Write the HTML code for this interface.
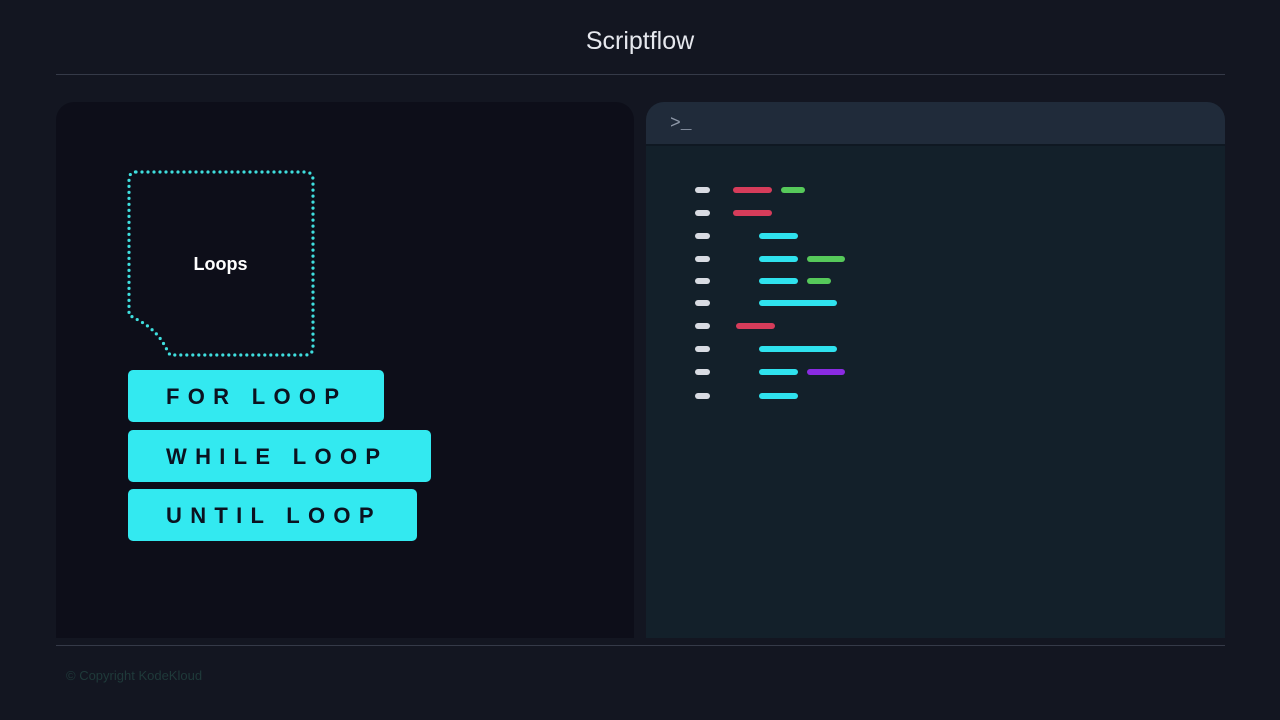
<!DOCTYPE html>
<html><head><style>
body{margin:0;width:1280px;height:720px;background:#131621;font-family:"Liberation Sans",sans-serif;position:relative;overflow:hidden}
.t{position:absolute;top:27px;left:0;width:1280px;text-align:center;color:#e6e8ee;font-size:25px}
.hr{position:absolute;left:56px;width:1169px;height:1px;background:#353a48}
.lp{position:absolute;left:56px;top:102px;width:578px;height:536px;background:#0d0e19;border-radius:18px 18px 0 0}
.rp{position:absolute;left:646px;top:102px;width:579px;height:536px;background:#13202a;border-radius:18px 18px 0 0;overflow:hidden}
.rh{height:42px;background:#202b3a;border-bottom:2px solid #0f1822}
.btn{position:absolute;left:128px;height:52px;background:#33e9f0;border-radius:5px;color:#0b1220;font-weight:bold;font-size:22px;letter-spacing:8.3px;line-height:54px;padding-left:38px;box-sizing:border-box}
.b{position:absolute;height:6px;border-radius:3px}
.g{background:#d8dbe2;left:695px;width:15px}.r{background:#d63c5a}.c{background:#2fe2ee}.n{background:#56c95a}.p{background:#8a2be2}
</style></head><body>
<div class="t">Scriptflow</div>
<div class="hr" style="top:74px"></div>
<div class="hr" style="top:645px"></div>
<div class="lp"></div>
<div class="rp"><div class="rh"><span style="position:absolute;left:24px;top:12px;color:#8e98a8;font-size:18px;font-family:'Liberation Mono',monospace">&gt;_</span></div></div>
<svg style="position:absolute;left:0;top:0" width="1280" height="720"><path d="M136 172 H305 Q313 172 313 180 V347 Q313 355 305 355 H170 L166 348 Q157 330 138 320 L129 315 V180 Q129 172 136 172 Z" fill="none" stroke="#3fdede" stroke-width="3.2" stroke-linecap="round" stroke-dasharray="0 6"/></svg>
<div style="position:absolute;left:128px;top:254px;width:185px;text-align:center;color:#fff;font-weight:bold;font-size:18px">Loops</div>
<div class="btn" style="top:370px;width:256px">FOR LOOP</div>
<div class="btn" style="top:430px;width:303px">WHILE LOOP</div>
<div class="btn" style="top:489px;width:289px">UNTIL LOOP</div>
<div class="b g" style="top:187px"></div><div class="b r" style="top:187px;left:733px;width:39px"></div><div class="b n" style="top:187px;left:781px;width:24px"></div>
<div class="b g" style="top:210px"></div><div class="b r" style="top:210px;left:733px;width:39px"></div>
<div class="b g" style="top:233px"></div><div class="b c" style="top:233px;left:759px;width:39px"></div>
<div class="b g" style="top:256px"></div><div class="b c" style="top:256px;left:759px;width:39px"></div><div class="b n" style="top:256px;left:807px;width:38px"></div>
<div class="b g" style="top:278px"></div><div class="b c" style="top:278px;left:759px;width:39px"></div><div class="b n" style="top:278px;left:807px;width:24px"></div>
<div class="b g" style="top:300px"></div><div class="b c" style="top:300px;left:759px;width:78px"></div>
<div class="b g" style="top:323px"></div><div class="b r" style="top:323px;left:736px;width:39px"></div>
<div class="b g" style="top:346px"></div><div class="b c" style="top:346px;left:759px;width:78px"></div>
<div class="b g" style="top:369px"></div><div class="b c" style="top:369px;left:759px;width:39px"></div><div class="b p" style="top:369px;left:807px;width:38px"></div>
<div class="b g" style="top:393px"></div><div class="b c" style="top:393px;left:759px;width:39px"></div>
<div style="position:absolute;left:66px;top:668px;color:#1f3a3a;font-size:13px">© Copyright KodeKloud</div>
</body></html>
